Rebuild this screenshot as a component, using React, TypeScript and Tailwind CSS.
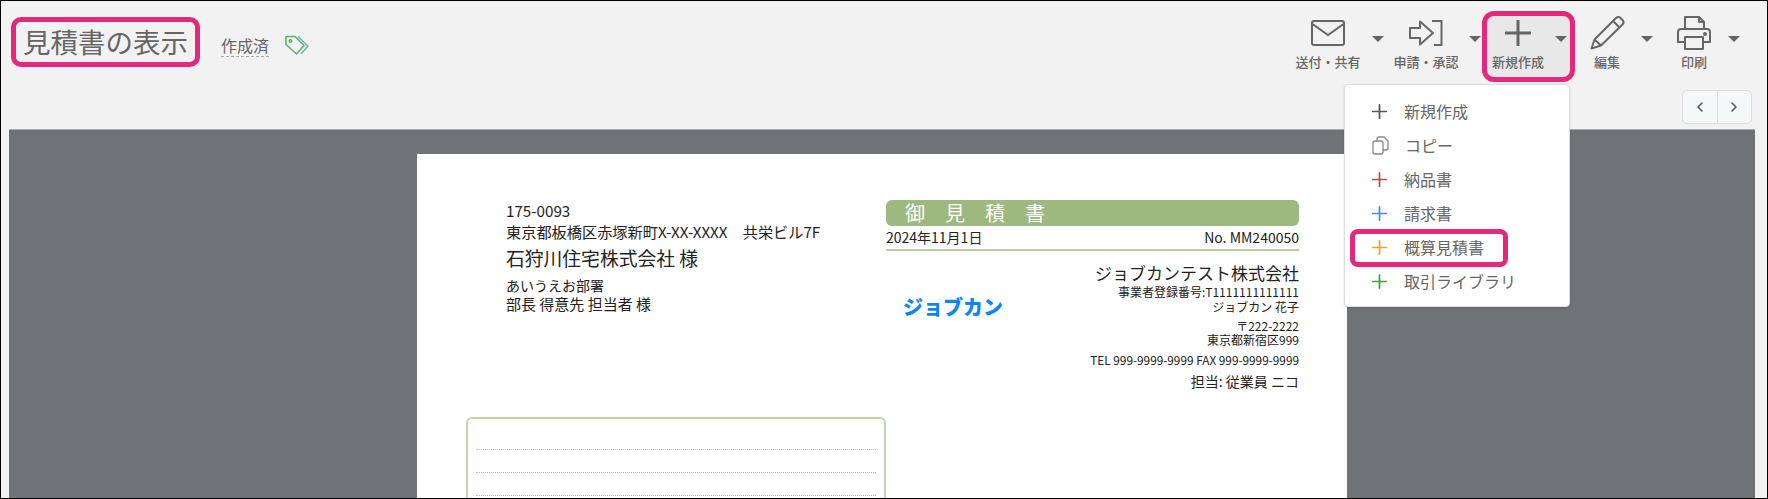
import { ChevronLeft, ChevronRight, Plus } from "lucide-react";

const font = "font-['Noto_Sans_CJK_JP','Noto_Sans',sans-serif]";

function Caret() {
    return <span className="mt-[20px] h-0 w-0 border-x-[6px] border-t-[6px] border-x-transparent border-t-[#666]" />;
}

function MailIcon() {
    return (
        <svg width="36" height="28" viewBox="0 0 36 28" fill="none" stroke="#666" strokeWidth="2">
            <rect x="2" y="2" width="32" height="24" rx="2" />
            <path d="M2.500 5l15.500 11L33.500 5" />
        </svg>
    );
}

function ApplyIcon() {
    return (
        <svg width="36" height="28" viewBox="0 0 36 28" fill="none" stroke="#666" strokeWidth="2">
            <path d="M2 9h10V2.500L25 14 12 25.500V19H2z" strokeLinejoin="round" />
            <path d="M24 2h9.500v24H26" />
        </svg>
    );
}

function PlusBigIcon() {
    return (
        <svg width="30" height="30" viewBox="0 0 30 30" fill="none" stroke="#666" strokeWidth="3">
            <path d="M15 2v26M2 15h26" />
        </svg>
    );
}

function PencilIcon() {
    return (
        <svg width="36" height="36" viewBox="0 0 36 36" fill="none" stroke="#666" strokeWidth="2" strokeLinejoin="round">
            <path d="M2.500 33.500l3-9L27 3c1.500-1.500 3-1.500 4.500 0l2 2c1.500 1.500 1.500 3 0 4.500L12 30.500z" />
            <path d="M5.500 24.500L12 30.500M24 6l6.500 6.500" />
        </svg>
    );
}

function PrinterIcon() {
    return (
        <svg width="36" height="36" viewBox="0 0 36 36" fill="none" stroke="#666" strokeWidth="2" strokeLinejoin="round">
            <path d="M9 14V2h14l5 5v7" />
            <path d="M23 2v5h5" />
            <path d="M9 27H2V17c0-2 1-3 3-3h26c2 0 3 1 3 3v10h-7" />
            <path d="M9 22h18v12H9z" />
            <circle cx="29" cy="19" r="1" fill="#666" />
        </svg>
    );
}

function TagIcon() {
    return (
        <svg width="25" height="21" viewBox="0 0 25 21" fill="none" strokeWidth="1.500" strokeLinejoin="round">
            <path d="M1 1.500h9l9 9-7.500 8.500L1 9.500z" stroke="#5fae6c" />
            <path d="M13 1.500l10 9.500-7 8" stroke="#5cc0b0" />
            <circle cx="5.500" cy="6" r="1.300" stroke="#5fae6c" />
        </svg>
    );
}

function CopyIcon() {
    return (
        <svg width="24" height="24" viewBox="0 0 24 24" fill="none" stroke="#888" strokeWidth="1.300" strokeLinejoin="round">
            <path d="M9 8V6a2 2 0 0 1 2-2h5l4 4v7a2 2 0 0 1-2 2h-3" />
            <rect x="5" y="8" width="10" height="13" rx="2" />
        </svg>
    );
}

const toolbar = [
    { label: "送付・共有", icon: <MailIcon />, box: "pr-[6px] pt-[4px]", col: "w-[72px] mr-[8px]" },
    { label: "申請・承認", icon: <ApplyIcon />, box: "pr-[2px] pt-[4px]", col: "w-[72px] mr-[7px]" },
    { label: "新規作成", icon: <PlusBigIcon />, box: "rounded-[12px] border-[5px] border-[#e6287a] bg-[#e8e8e8] pr-[3px] -mx-[1px] -mt-[1px] h-[71px]", col: "w-[62px] mr-[6px]" },
    { label: "編集", icon: <PencilIcon />, box: "pl-[8px] pr-[16px] pt-[4px]", col: "w-[50px] mr-[9px]" },
    { label: "印刷", icon: <PrinterIcon />, box: "pt-[4px]", col: "w-[50px] mr-[9px]" },
];

const menu = [
    { label: "新規作成", color: "#555555" },
    { label: "コピー", color: "" },
    { label: "納品書", color: "#a8573a" },
    { label: "請求書", color: "#3b8fe0" },
    { label: "概算見積書", color: "#f2a02c" },
    { label: "取引ライブラリ", color: "#3aa53a" },
];

export default function App() {
    return (
        <div className={`${font} relative h-[499px] w-[1768px] overflow-hidden border border-black bg-[#f2f2f2] text-[#666]`}>
            <header className="flex h-[128px] items-start justify-between">
                <div className="flex items-center pl-[10px] pt-[16px]">
                    <h1 className="flex h-[50px] w-[189px] items-center justify-center rounded-[10px] border-[5px] border-[#e6287a] text-[27.500px] leading-none font-normal">
                        見積書の表示
                    </h1>
                    <span className="ml-[21px] mt-[8px] border-b border-dashed border-[#aaa] text-[16px] leading-[21px]">作成済</span>
                    <span className="ml-[16px] mt-[7px]"><TagIcon /></span>
                </div>
                <div className="flex flex-col items-end pr-[15px]">
                    <div className="flex pr-[12px] pt-[11px]">
                        {toolbar.map((item) => (
                            <div key={item.label} className={`flex h-[70px] items-start ${item.box}`}>
                                <div className={`flex ${item.col} flex-col items-center`}>
                                    <div className="flex h-[34px] items-center">{item.icon}</div>
                                    <span className="mt-[3px] text-[13px] leading-[18px] font-medium whitespace-nowrap">{item.label}</span>
                                </div>
                                <Caret />
                            </div>
                        ))}
                    </div>
                    <div className="mt-[8px] flex h-[34px] w-[70px] rounded-[5px] border border-[#ddd] bg-[#f5f8f9]">
                        <button className="flex flex-1 items-center justify-center border-r border-[#ddd]"><ChevronLeft size={16} strokeWidth={2.400} color="#555" /></button>
                        <button className="flex flex-1 items-center justify-center"><ChevronRight size={16} strokeWidth={2.400} color="#555" /></button>
                    </div>
                </div>
            </header>

            <main className="ml-[8px] mr-[12px] flex h-[370px] justify-start border-t border-[#aaa] bg-[#6f7376] pl-[408px] pt-[24px]">
                <article className="h-[400px] w-[930px] bg-white pl-[49px] pr-[48px] pt-[46px] text-[#222]">
                    <div className="grid grid-cols-[420px_413px]">
                        <div className="flex flex-col">
                            <div className="pl-[40px] text-[15.200px] leading-[21px]">
                                <p>175-0093</p>
                                <p>東京都板橋区赤塚新町X-XX-XXXX　共栄ビル7F</p>
                                <p className="mt-[3px] text-[18.800px] leading-[26px]">石狩川住宅株式会社 様</p>
                                <p className="mt-[5px] text-[14px] leading-[18px]">あいうえお部署</p>
                                <p className="text-[15px] leading-[19px]">部長 得意先 担当者 様</p>
                            </div>
                            <div className="mt-[104px] h-[200px] rounded-t-[6px] border-2 border-[#c3d5a8] px-[8px] pt-[8px]">
                                <div className="h-[23px] border-b border-dotted border-[#b5cb98]" />
                                <div className="h-[23px] border-b border-dotted border-[#b5cb98]" />
                                <div className="h-[23px] border-b border-dotted border-[#b5cb98]" />
                            </div>
                        </div>
                        <div className="flex flex-col text-right">
                            <div className="flex h-[26px] items-center gap-[20px] rounded-[6px] bg-[#9db97f] pl-[19px] text-[20px] leading-none text-white">
                                <span>御</span><span>見</span><span>積</span><span>書</span>
                            </div>
                            <div className="flex h-[25px] items-center justify-between border-b-2 border-[#b9cea0] text-[14px]">
                                <span>2024年11月1日</span>
                                <span>No. MM240050</span>
                            </div>
                            <div className="flex">
                                <div className="ml-[17px] mt-[42px] text-[20px] leading-[27px] font-black whitespace-nowrap text-[#0e86f5]">ジョブカン</div>
                                <div className="flex-1">
                                    <p className="mt-[10px] text-[17px] leading-[24px]">ジョブカンテスト株式会社</p>
                                    <p className="text-[12px] leading-[14px] whitespace-nowrap">事業者登録番号:T1111111111111</p>
                                    <p className="text-[12px] leading-[16px]">ジョブカン 花子</p>
                                    <p className="mt-[4px] text-[12px] leading-[14px]">〒222-2222</p>
                                    <p className="text-[12px] leading-[14px]">東京都新宿区999</p>
                                    <p className="mt-[5px] text-[11.800px] leading-[16px]">TEL 999-9999-9999 FAX 999-9999-9999</p>
                                    <p className="mt-[3px] text-[14px] leading-[20px]">担当: 従業員 ニコ</p>
                                </div>
                            </div>
                        </div>
                    </div>
                </article>
            </main>

            <div className="absolute left-[1343px] top-[83px] w-[226px] rounded-[4px] border border-[#ddd] bg-white pb-[8px] pt-[9px] shadow-sm">
                {menu.map((item) => (
                    <div key={item.label} className="relative flex h-[34px] items-center pl-[23px] text-[16px] text-[#666]">
                        {item.color ? <Plus size={23} color={item.color} strokeWidth={1.800} /> : <CopyIcon />}
                        <span className="ml-[13px]">{item.label}</span>
                        {item.label === "概算見積書" && (
                            <span className="absolute left-[5px] top-[-1px] h-[38px] w-[158px] rounded-[8px] border-[5px] border-[#e6287a]" />
                        )}
                    </div>
                ))}
            </div>
        </div>
    );
}
